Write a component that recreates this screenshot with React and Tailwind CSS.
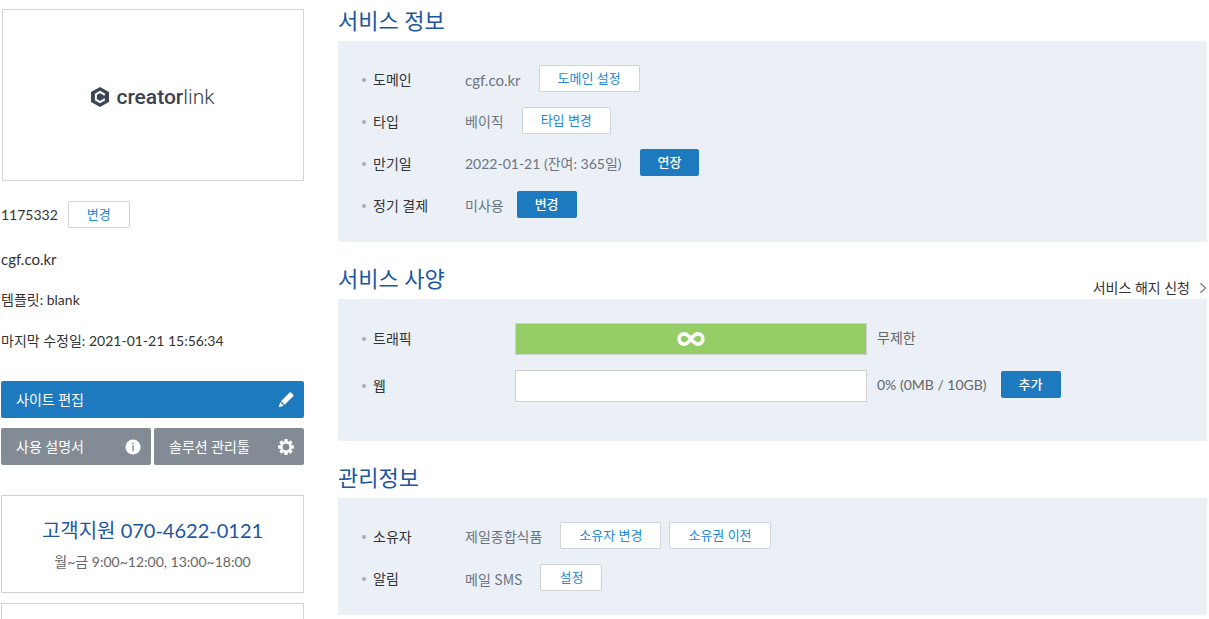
import React from 'react';

const GhostButton = ({ children }) => (
  <button
    type="button"
    className="h-[27px] shrink-0 rounded-[2px] border border-[#d0d3d8] bg-white px-[18px] text-[13px] leading-[25px] text-[#2288d6]"
  >
    {children}
  </button>
);

const PrimaryButton = ({ children }) => (
  <button
    type="button"
    className="h-[27px] shrink-0 rounded-[2px] bg-[#1e7abf] px-[18px] text-[13px] font-medium leading-[27px] text-white"
  >
    {children}
  </button>
);

const Label = ({ children }) => (
  <span className="flex items-center gap-[7px] text-[#333]">
    <span className="size-1 rounded-full bg-[#aaa]" />
    {children}
  </span>
);

const InfoRow = ({ label, value, children }) => (
  <li className="flex h-[27px]">
    <div className="w-[103px] shrink-0 pt-[5px]">
      <Label>{label}</Label>
    </div>
    <span className="pt-[5px] text-[#6b757f]">{value}</span>
    {children}
  </li>
);

const Section = ({ title, link, children }) => (
  <section>
    <header className="flex h-8 items-start justify-between">
      <h2 className="text-[22px] leading-6 text-[#1c56a0]">{title}</h2>
      {link}
    </header>
    {children}
  </section>
);

const PencilIcon = () => (
  <svg width="16" height="16" viewBox="0 0 16 16" fill="#fff" aria-hidden="true">
    <path d="M11.6 .6a1 1 0 0 1 1.4 0l2.2 2.2a1 1 0 0 1 0 1.4L6.6 12.8 3 9.2z" />
    <path d="M2.1 10.1l3.6 3.6L.8 15.2z" />
  </svg>
);

const InfoIcon = () => (
  <svg width="16" height="16" viewBox="0 0 16 16" aria-hidden="true">
    <circle cx="8" cy="8" r="7.6" fill="#fff" />
    <path d="M7.2 3.8h1.6v1.5H7.2zM6.6 6.4h2.2v5.8H7.4V7.3h-.8z" fill="#838c94" />
  </svg>
);

const GearIcon = () => (
  <svg width="16" height="16" viewBox="0 0 16 16" aria-hidden="true">
    <g fill="#fff">
      <path d="M6.5 0h3l.5 4H6zM6.5 16h3l.5-4H6zM0 6.5v3l4 .5V6zM16 6.5v3l-4 .5V6z" />
      <path d="M6.5 0h3l.5 4H6zM6.5 16h3l.5-4H6zM0 6.5v3l4 .5V6zM16 6.5v3l-4 .5V6z" transform="rotate(45 8 8)" />
    </g>
    <circle cx="8" cy="8" r="4.6" fill="none" stroke="#fff" strokeWidth="2.6" />
    <circle cx="8" cy="8" r="3.2" fill="#838c94" />
  </svg>
);

const InfinityIcon = () => (
  <svg width="28" height="14" viewBox="0 0 28 14" fill="none" stroke="#fff" strokeWidth="3.6" aria-hidden="true">
    <path d="M14 7C11.6 3.8 9.8 1.9 7.2 1.9a5.1 5.1 0 0 0 0 10.2C9.8 12.1 11.6 10.2 14 7s4.2-5.1 6.8-5.1a5.1 5.1 0 0 1 0 10.2C18.2 12.1 16.4 10.2 14 7z" />
  </svg>
);

const Logo = () => (
  <div className="flex items-center gap-[7px] pt-1 text-[#3b4252]">
    <svg width="18" height="20" viewBox="0 0 18 20" aria-hidden="true">
      <path d="M9 0l9 5v10l-9 5-9-5V5z" fill="#3d4754" />
      <path
        d="M12.9 8.4V7.2L9 5 4.9 7.4v5.2L9 15l3.9-2.2v-1.2"
        fill="none"
        stroke="#fff"
        strokeWidth="2"
      />
      <path d="M8 8.6h5v2.8H8z" fill="#3d4754" />
    </svg>
    <span className="font-['Roboto',sans-serif] text-[21px] leading-5">
      <span className="font-medium">creator</span>
      <span className="font-light">link</span>
    </span>
  </div>
);

const Sidebar = () => (
  <aside className="w-[303px] shrink-0 pt-[9px] text-[#333]">
    <div className="ml-px flex h-[172px] items-center justify-center border border-[#d5d5d7]">
      <Logo />
    </div>

    <div className="mt-5 flex h-[27px] items-center gap-[10px]">
      <span>1175332</span>
      <GhostButton>변경</GhostButton>
    </div>
    <ul className="mt-[21px] space-y-[21px]">
      <li className="text-[15px] leading-5">cgf.co.kr</li>
      <li>템플릿: blank</li>
      <li>마지막 수정일: 2021-01-21 15:56:34</li>
    </ul>

    <button
      type="button"
      className="mt-[30px] flex h-[37px] w-full items-center justify-between rounded-[2px] bg-[#1e7abf] pr-[10px] pl-[15px] text-white"
    >
      사이트 편집
      <PencilIcon />
    </button>
    <div className="mt-[10px] grid grid-cols-2 gap-[3px]">
      <button
        type="button"
        className="flex h-[37px] items-center justify-between rounded-[2px] bg-[#838c94] pr-[10px] pl-[15px] text-white"
      >
        사용 설명서
        <InfoIcon />
      </button>
      <button
        type="button"
        className="flex h-[37px] items-center justify-between rounded-[2px] bg-[#838c94] pr-[10px] pl-[15px] text-white"
      >
        솔루션 관리툴
        <GearIcon />
      </button>
    </div>

    <div className="mt-[30px] h-[98px] border border-[#d0d3d8] pt-5 text-center">
      <p className="text-[20px] leading-7 text-[#1c56a0]">고객지원 070-4622-0121</p>
      <p className="mt-2 text-[#666]">월~금 9:00~12:00, 13:00~18:00</p>
    </div>
    <div className="mt-[10px] h-4 border border-b-0 border-[#d0d3d8]" />
  </aside>
);

export default function App() {
  return (
    <div className="flex gap-[34px] bg-white pr-[2px] pl-px font-[Lato,'Noto_Sans_CJK_KR',sans-serif] text-[14px] leading-5 whitespace-nowrap">
      <Sidebar />
      <main className="flex min-w-0 flex-1 flex-col gap-[25px] pt-[9px]">
        <Section title="서비스 정보">
          <ul className="space-y-[15px] bg-[#ebf0f7] p-6">
            <InfoRow label="도메인" value={<span className="text-[15px] leading-5">cgf.co.kr</span>}>
              <div className="ml-[18px] flex"><GhostButton>도메인 설정</GhostButton></div>
            </InfoRow>
            <InfoRow label="타입" value="베이직">
              <div className="ml-[18px] flex"><GhostButton>타입 변경</GhostButton></div>
            </InfoRow>
            <InfoRow label="만기일" value="2022-01-21 (잔여: 365일)">
              <div className="ml-[18px] flex"><PrimaryButton>연장</PrimaryButton></div>
            </InfoRow>
            <InfoRow label="정기 결제" value="미사용">
              <div className="ml-[13px] flex"><PrimaryButton>변경</PrimaryButton></div>
            </InfoRow>
          </ul>
        </Section>

        <Section
          title="서비스 사양"
          link={
            <a href="#cancel" className="flex items-center gap-[9px] self-end pb-px text-[#333]">
              서비스 해지 신청
              <svg width="8" height="12" viewBox="0 0 8 12" fill="none" stroke="#777" strokeWidth="1.2" aria-hidden="true">
                <path d="M1.5 1.2L6.5 6l-5 4.8" />
              </svg>
            </a>
          }
        >
          <ul className="space-y-[15px] bg-[#ebf0f7] px-6 pt-6 pb-[39px]">
            <li className="flex h-8 items-center">
              <div className="w-[153px] shrink-0"><Label>트래픽</Label></div>
              <div className="flex h-8 w-[352px] items-center justify-center border border-[#cfd2d5] bg-[#95ce66]">
                <InfinityIcon />
              </div>
              <span className="ml-[10px] pb-[2px] text-[#666]">무제한</span>
            </li>
            <li className="flex h-8 items-center">
              <div className="w-[153px] shrink-0"><Label>웹</Label></div>
              <div className="h-8 w-[352px] border border-[#cfd2d5] bg-white" />
              <div className="ml-[10px] flex items-center gap-[14px] pb-[3px] text-[#666]">
                0% (0MB / 10GB)
                <PrimaryButton>추가</PrimaryButton>
              </div>
            </li>
          </ul>
        </Section>

        <Section title="관리정보">
          <ul className="space-y-[15px] bg-[#ebf0f7] p-6">
            <InfoRow label="소유자" value="제일종합식품">
              <div className="ml-[18px] flex gap-2">
                <GhostButton>소유자 변경</GhostButton>
                <GhostButton>소유권 이전</GhostButton>
              </div>
            </InfoRow>
            <InfoRow label="알림" value={<>메일 <span className="font-['Noto_Sans_CJK_KR',sans-serif]">SMS</span></>}>
              <div className="ml-[18px] flex"><GhostButton>설정</GhostButton></div>
            </InfoRow>
          </ul>
        </Section>
      </main>
    </div>
  );
}
